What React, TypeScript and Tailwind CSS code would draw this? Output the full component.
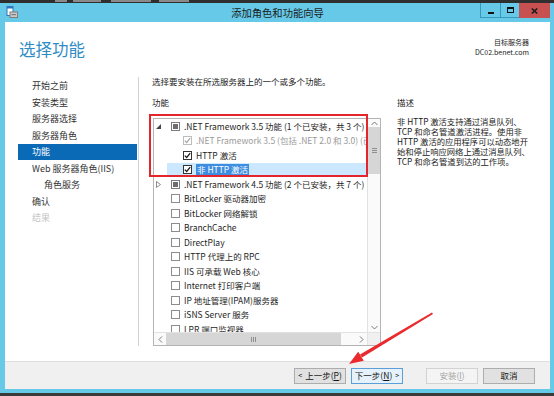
import React from 'react';

type Check = 'none' | 'checked' | 'mixed' | 'disabled';
type Row = {
  label: string;
  level: number;
  check: Check;
  expander?: 'open' | 'closed';
  selected?: boolean;
  dim?: boolean;
};

const navItems = [
  { t: '开始之前' },
  { t: '安装类型' },
  { t: '服务器选择' },
  { t: '服务器角色' },
  { t: '功能', active: true },
  { t: 'Web 服务器角色(IIS)' },
  { t: '角色服务', indent: true },
  { t: '确认' },
  { t: '结果', disabled: true },
];

const rows: Row[] = [
  { label: '.NET Framework 3.5 功能 (1 个已安装，共 3 个)', level: 0, check: 'mixed', expander: 'open' },
  { label: '.NET Framework 3.5 (包括 .NET 2.0 和 3.0) (已安装)', level: 1, check: 'disabled', dim: true },
  { label: 'HTTP 激活', level: 1, check: 'checked' },
  { label: '非 HTTP 激活', level: 1, check: 'checked', selected: true },
  { label: '.NET Framework 4.5 功能 (2 个已安装，共 7 个)', level: 0, check: 'mixed', expander: 'closed' },
  { label: 'BitLocker 驱动器加密', level: 0, check: 'none' },
  { label: 'BitLocker 网络解锁', level: 0, check: 'none' },
  { label: 'BranchCache', level: 0, check: 'none' },
  { label: 'DirectPlay', level: 0, check: 'none' },
  { label: 'HTTP 代理上的 RPC', level: 0, check: 'none' },
  { label: 'IIS 可承载 Web 核心', level: 0, check: 'none' },
  { label: 'Internet 打印客户端', level: 0, check: 'none' },
  { label: 'IP 地址管理(IPAM)服务器', level: 0, check: 'none' },
  { label: 'iSNS Server 服务', level: 0, check: 'none' },
  { label: 'LPR 端口监视器', level: 0, check: 'none' },
];

function Box({ state }: { state: Check }) {
  if (state === 'mixed') {
    return (
      <span className="w-[9px] h-[9px] shrink-0 border border-[#7d7d7d] bg-white flex items-center justify-center">
        <span className="w-[5px] h-[5px] bg-[#6e6e6e]" />
      </span>
    );
  }
  const border =
    state === 'disabled' ? 'border-[#bdbdbd]' : state === 'checked' ? 'border-[#333]' : 'border-[#8c8c8c]';
  return (
    <span className={`w-[9px] h-[9px] shrink-0 border ${border} bg-white flex items-center justify-center`}>
      {state !== 'none' && (
        <svg width="7" height="7" viewBox="0 0 7 7">
          <path
            d="M0.8 3.6 L2.7 5.5 L6.2 1.2"
            fill="none"
            stroke={state === 'disabled' ? '#a9a9a9' : '#1b1b1b'}
            strokeWidth="1.3"
          />
        </svg>
      )}
    </span>
  );
}

function Chevron({ dir }: { dir: 'up' | 'down' | 'left' | 'right' }) {
  const d = {
    up: 'M0.5 4 L3.5 1 L6.5 4',
    down: 'M0.5 1 L3.5 4 L6.5 1',
    left: 'M4 0.5 L1 3.5 L4 6.5',
    right: 'M1 0.5 L4 3.5 L1 6.5',
  }[dir];
  const vertical = dir === 'up' || dir === 'down';
  return (
    <svg width={vertical ? 7 : 5} height={vertical ? 5 : 7} viewBox={vertical ? '0 0 7 5' : '0 0 5 7'}>
      <path d={d} fill="none" stroke="#7a7a7a" strokeWidth="1" />
    </svg>
  );
}

function TreeRow({ row }: { row: Row }) {
  return (
    <div
      className={`h-[14.5px] flex items-center whitespace-nowrap ${row.level === 1 ? 'ml-[12px]' : ''} ${
        row.selected ? 'bg-[#cce8ff]' : ''
      }`}
    >
      <span className="w-[16px] shrink-0 flex items-center pl-[1px]">
        {row.expander === 'open' && (
          <svg width="5" height="5" viewBox="0 0 5 5">
            <polygon points="5,0 5,5 0,5" fill="#444" />
          </svg>
        )}
        {row.expander === 'closed' && (
          <svg width="5" height="7" viewBox="0 0 5 7">
            <polygon points="0.5,0.5 4.5,3.5 0.5,6.5" fill="none" stroke="#8a8a8a" strokeWidth="1" />
          </svg>
        )}
      </span>
      <Box state={row.check} />
      <span
        className={`ml-[4px] leading-[11px] ${row.dim ? 'text-[#9a9a9a]' : 'text-[#1e1e1e]'} ${
          row.selected ? 'bg-[#3d8ee0] text-white px-[1px] -ml-[-3px]' : ''
        }`}
      >
        {row.label}
      </span>
    </div>
  );
}

export default function App() {
  return (
    <div className="relative w-[554px] h-[396px] overflow-hidden bg-[#2f2f2f] flex flex-col font-['Noto_Sans_CJK_SC',sans-serif]">
      {/* window behind, barely visible */}
      <div className="h-[3px] flex items-start">
        <span className="ml-[55px] w-[12px] h-[2px] bg-[#8a8a8a]" />
        <span className="ml-[6px] w-[28px] h-[2px] bg-[#8a8a8a]" />
        <span className="ml-[10px] w-[40px] h-[2px] bg-[#8a8a8a]" />
        <span className="ml-[8px] w-[30px] h-[2px] bg-[#8a8a8a]" />
      </div>

      <div className="h-[390px] flex flex-col bg-[#66c9e8] pl-[5px] pr-[4px] pb-[4px]">
        {/* title bar */}
        <div className="h-[20px] grid grid-cols-[1fr_auto_1fr] items-center">
          <div className="pl-[1px] self-start pt-[3px]">
            <svg width="12" height="12" viewBox="0 0 12 12">
              <rect x="1" y="0.5" width="6" height="9" fill="#fff" stroke="#2f74c0" />
              <rect x="1" y="0.5" width="6" height="2" fill="#2f74c0" />
              <rect x="4" y="6" width="7.5" height="5.5" fill="#c9c9c9" stroke="#7d7d7d" />
              <rect x="5.5" y="8" width="4.5" height="1.2" fill="#7d7d7d" />
            </svg>
          </div>
          <div className="text-[10.3px] leading-[12px] text-[#1b1b1b]">添加角色和功能向导</div>
          <div className="justify-self-end self-start flex h-[15px]">
            <div className="w-[20px] border-l border-b border-[#3a98bb] flex items-end justify-center pb-[3px]">
              <span className="w-[6px] h-[2px] bg-[#111]" />
            </div>
            <div className="w-[19px] border-l border-b border-[#3a98bb] flex items-center justify-center">
              <span className="w-[7px] h-[6px] border border-[#111] border-t-2" />
            </div>
            <div className="w-[31px] bg-[#c75050] flex items-center justify-center">
              <svg width="7" height="6" viewBox="0 0 7 6">
                <path d="M0.8 0.5 L6.2 5.5 M6.2 0.5 L0.8 5.5" stroke="#1d1d1d" strokeWidth="1.6" />
              </svg>
            </div>
          </div>
        </div>

        {/* content */}
        <div className="flex-1 bg-white flex flex-col">
          <div className="h-[55px] flex justify-between items-start pl-[14px] pr-[21px] pt-[17px]">
            <div className="text-[16.5px] leading-[20px] text-[#2f8cc4]">选择功能</div>
            <div className="-mt-[2px] text-right text-[7px] leading-[10px] text-[#222]">
              <div>目标服务器</div>
              <div>DC02.benet.com</div>
            </div>
          </div>

          <div className="flex-1 flex pb-[15px]">
            <div className="w-[134px] shrink-0 pl-[13px] pr-[1px] border-r border-[#d3d3d3] pt-[0.5px]">
              {navItems.map((n) => (
                <div
                  key={n.t}
                  className={`h-[16.5px] flex items-center text-[9px] leading-[11px] whitespace-nowrap ${
                    n.indent ? 'pl-[26px]' : 'pl-[14px]'
                  } ${n.active ? 'bg-[#0b6ab6] text-white' : n.disabled ? 'text-[#c4c4c4]' : 'text-[#333]'}`}
                >
                  {n.t}
                </div>
              ))}
            </div>

            <div className="flex-1 pl-[13px] text-[8.5px]">
              <div className="-mt-[1px] leading-[10px] text-[#222]">选择要安装在所选服务器上的一个或多个功能。</div>
              <div className="flex">
                <div className="w-[229px] shrink-0">
                  <div className="mt-[11px] leading-[10px] text-[#222]">功能</div>
                  <div className="mt-[11px] ml-[1px] w-[228px] h-[228px] border border-[#b4b4b4] flex flex-col">
                    <div className="flex-1 flex min-h-0">
                      <div className="flex-1 overflow-hidden pl-[1px]">
                        {rows.map((r) => (
                          <TreeRow key={r.label} row={r} />
                        ))}
                      </div>
                      <div className="w-[13px] border-l border-[#e2e2e2] bg-[#fafafa] flex flex-col">
                        <div className="h-[8px] flex items-center justify-center">
                          <Chevron dir="up" />
                        </div>
                        <div className="h-[47px] bg-[#d6d6d6] flex flex-col items-center justify-center gap-[1px]">
                          <span className="w-[5px] h-[1px] bg-[#8f8f8f]" />
                          <span className="w-[5px] h-[1px] bg-[#8f8f8f]" />
                          <span className="w-[5px] h-[1px] bg-[#8f8f8f]" />
                        </div>
                        <div className="flex-1" />
                        <div className="h-[10px] flex items-center justify-center">
                          <Chevron dir="down" />
                        </div>
                      </div>
                    </div>
                    <div className="h-[13px] flex border-t border-[#e2e2e2]">
                      <div className="flex-1 flex bg-[#fafafa]">
                        <div className="w-[12px] flex items-center justify-center">
                          <Chevron dir="left" />
                        </div>
                        <div className="w-[175px] bg-[#d6d6d6] flex items-center justify-center gap-[1px]">
                          <span className="w-[1px] h-[5px] bg-[#8f8f8f]" />
                          <span className="w-[1px] h-[5px] bg-[#8f8f8f]" />
                          <span className="w-[1px] h-[5px] bg-[#8f8f8f]" />
                        </div>
                        <div className="flex-1" />
                        <div className="w-[11px] flex items-center justify-center">
                          <Chevron dir="right" />
                        </div>
                      </div>
                      <div className="w-[13px] bg-[#f0f0f0] border-l border-[#e2e2e2]" />
                    </div>
                  </div>
                </div>
                <div className="ml-[16px] text-[#222]">
                  <div className="mt-[11px] leading-[10px]">描述</div>
                  <div className="mt-[9px] leading-[10px] text-[8.3px] whitespace-nowrap">
                    非 HTTP 激活支持通过消息队列、
                    <br />
                    TCP 和命名管道激活进程。使用非
                    <br />
                    HTTP 激活的应用程序可以动态地开
                    <br />
                    始和停止响应网络上通过消息队列、
                    <br />
                    TCP 和命名管道到达的工作项。
                  </div>
                </div>
              </div>
            </div>
          </div>
        </div>

        {/* footer */}
        <div className="h-[29px] bg-[#f0f0f0] border-t border-[#dedede] flex items-center justify-end pr-[15px] text-[8.5px]">
          <button className="h-[16px] w-[52px] border border-[#adadad] bg-[#e1e1e1] text-[#111] flex items-center justify-center">
            <span className="text-[7px] mr-[3px]">&lt;</span>上一步(<u>P</u>)
          </button>
          <button className="ml-[5px] h-[16px] w-[52px] border border-[#5c9fd6] bg-[#e5f1fb] text-[#111] flex items-center justify-center">
            下一步(<u>N</u>)<span className="text-[7px] ml-[3px]">&gt;</span>
          </button>
          <button className="ml-[23px] h-[16px] w-[52px] border border-[#d2d2d2] bg-[#f4f4f4] text-[#a5a5a5] flex items-center justify-center">
            安装(<u>I</u>)
          </button>
          <button className="ml-[5px] h-[16px] w-[52px] border border-[#adadad] bg-[#e1e1e1] text-[#111] flex items-center justify-center">
            取消
          </button>
        </div>
      </div>

      <div className="h-[3px] bg-[#3a3a3a]" />

      {/* annotations */}
      <div className="absolute left-[149px] top-[114px] w-[219px] h-[63px] border-2 border-[#e5252c]" />
      <svg className="absolute left-0 top-0 pointer-events-none" width="554" height="396" viewBox="0 0 554 396">
        <polygon points="432,312.5 433,314 362,357.5 360,354.5" fill="#ea2a2d" />
        <polygon points="349,364 358.2,351.8 363.8,360.8" fill="#ea2a2d" />
      </svg>
    </div>
  );
}
